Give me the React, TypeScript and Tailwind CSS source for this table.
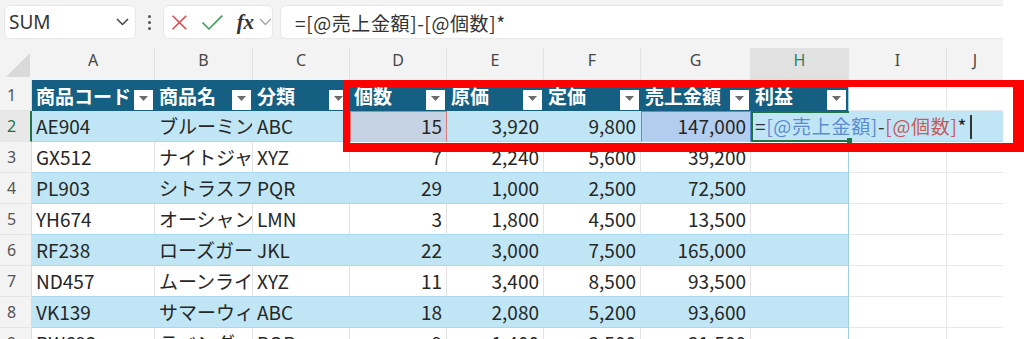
import React from "react";

const colW = [
  "w-[123px]",
  "w-[98px]",
  "w-[97px]",
  "w-[97px]",
  "w-[97px]",
  "w-[97px]",
  "w-[110px]",
  "w-[98px]",
  "w-[98px]",
  "w-[56px]",
];
const letters = ["A", "B", "C", "D", "E", "F", "G", "H", "I", "J"];
const headers = ["商品コード", "商品名", "分類", "個数", "原価", "定価", "売上金額", "利益"];

type Row = [string, string, string, number, number, number, number];
const rows: Row[] = [
  ["AE904", "ブルーミングガーデン", "ABC", 15, 3920, 9800, 147000],
  ["GX512", "ナイトジャスミン", "XYZ", 7, 2240, 5600, 39200],
  ["PL903", "シトラスフレッシュ", "PQR", 29, 1000, 2500, 72500],
  ["YH674", "オーシャンブリーズ", "LMN", 3, 1800, 4500, 13500],
  ["RF238", "ローズガーデン", "JKL", 22, 3000, 7500, 165000],
  ["ND457", "ムーンライトムスク", "XYZ", 11, 3400, 8500, 93500],
  ["VK139", "サマーウィンド", "ABC", 18, 2080, 5200, 93600],
  ["RW692", "ラベンダーミスト", "PQR", 9, 1400, 3500, 31500],
];

const fmt = (n: number) => n.toLocaleString("en-US");

function Dropdown() {
  return (
    <div className="w-[19px] h-[20px] bg-white self-end mb-[1px] mr-[2px] shrink-0 flex justify-center pt-[6px]">
      <svg width="9" height="5" viewBox="0 0 9 5">
        <polygon points="0,0 9,0 4.5,5" fill="#6b6b6b" />
      </svg>
    </div>
  );
}

function TopBar() {
  return (
    <div className="h-[48px] bg-[#f3f3f3] flex items-start pt-[5px] pl-[4px]">
      <div className="w-[132px] h-[34px] bg-white rounded-[6px] border border-[#e8e8e8] flex items-center justify-between pl-[4px] pr-[6px]">
        <span className="text-[19px] text-[#333] font-['Noto_Sans',sans-serif] leading-none">SUM</span>
        <svg width="13" height="8" viewBox="0 0 13 8">
          <path d="M1 1 L6.5 6.5 L12 1" stroke="#444" strokeWidth="1.5" fill="none" />
        </svg>
      </div>
      <div className="w-[27px] h-[34px] flex flex-col items-center justify-center gap-[3px]">
        <span className="w-[3px] h-[3px] rounded-full bg-[#555]" />
        <span className="w-[3px] h-[3px] rounded-full bg-[#555]" />
        <span className="w-[3px] h-[3px] rounded-full bg-[#555]" />
      </div>
      <div className="w-[110px] h-[34px] bg-white rounded-[6px] border border-[#e8e8e8] flex items-center pl-[7px]">
        <svg width="17" height="17" viewBox="0 0 16 16">
          <path d="M1.5 1.5 L14.5 14.5 M14.5 1.5 L1.5 14.5" stroke="#d6434a" strokeWidth="1.4" fill="none" />
        </svg>
        <svg className="ml-[13px]" width="23" height="17" viewBox="0 0 23 17">
          <path d="M1.5 8.5 L8 15 L21.5 1.5" stroke="#3a9c55" strokeWidth="1.6" fill="none" />
        </svg>
        <span className="ml-[13px] text-[21px] italic font-semibold font-['Liberation_Serif',serif] text-[#333] leading-none">fx</span>
        <svg className="ml-[5px]" width="13" height="8" viewBox="0 0 13 8">
          <path d="M1 1 L6.5 6.5 L12 1" stroke="#a5a5a5" strokeWidth="1.3" fill="none" />
        </svg>
      </div>
      <div className="flex-1 ml-[7px] h-[34px] bg-white rounded-l-[6px] border border-r-0 border-[#e8e8e8] flex items-center pl-[14px]">
        <span className="text-[19px] text-[#333] font-['Noto_Sans_CJK_JP',sans-serif] leading-none tracking-[0.6px]">
          =[@売上金額]-[@個数]*
        </span>
      </div>
    </div>
  );
}

function ColumnHeaders() {
  return (
    <div className="h-[32px] flex bg-[#f3f3f3]">
      <div className="w-[32px] h-full shrink-0">
        <svg width="32" height="32" viewBox="0 0 32 32">
          <polygon points="6,29 30,29 30,5" fill="#d9d9d9" />
        </svg>
      </div>
      {letters.map((l, i) => (
        <div
          key={l}
          className={`${colW[i]} shrink-0 h-full flex justify-center items-start leading-[24px] text-[16px] font-['Noto_Sans',sans-serif] border-r border-[#e2e2e2] ${
            l === "H" ? "bg-[#e1e1e1] text-[#2f8060]" : "text-[#474747]"
          } ${i === 9 ? "border-r-0" : ""}`}
        >
          {l}
        </div>
      ))}
    </div>
  );
}

function RowHeader({ n, active }: { n: number; active?: boolean }) {
  return (
    <div
      className={`w-[32px] shrink-0 h-full flex items-center pl-[7px] text-[16px] font-['Noto_Sans',sans-serif] border-b border-[#e4e4e4] ${
        active ? "bg-[#e8e8e8] text-[#217346] border-r-2 border-r-[#217346]" : "bg-[#f3f3f3] text-[#555] border-r border-r-[#dadada]"
      }`}
    >
      {n}
    </div>
  );
}

function HeaderRow() {
  return (
    <div className="h-[31px] flex">
      <RowHeader n={1} />
      {headers.map((h, i) => (
        <div
          key={h}
          className={`${colW[i]} shrink-0 h-full bg-[#156082] flex items-center justify-between pl-[4px] text-white font-bold text-[19px] overflow-hidden whitespace-nowrap ${
            i === 7 ? "border-r border-[#9fd0e8]" : ""
          }`}
        >
          <span className="leading-none">{h}</span>
          <Dropdown />
        </div>
      ))}
      <div className={`${colW[8]} shrink-0 h-full bg-white border-r border-b border-[#e8e8e8]`} />
      <div className={`${colW[9]} shrink-0 h-full bg-white border-b border-[#e8e8e8]`} />
    </div>
  );
}

function DataRow({ r, idx }: { r: Row; idx: number }) {
  const blue = idx % 2 === 0;
  const first = idx === 0;
  const bg = blue ? "bg-[#c0e6f5]" : "bg-white";
  const vr = blue ? "border-r-[#c0e6f5]" : "border-r-[#e3e3e3]";
  const base = `shrink-0 h-full flex items-center whitespace-nowrap overflow-hidden text-[19px] text-[#262626] border-b border-b-[#a9d8ee] border-r`;
  const textCells = [r[0], r[1], r[2]];
  const nums = [r[3], r[4], r[5], r[6]];
  return (
    <div className="h-[31px] flex">
      <RowHeader n={idx + 2} active={first} />
      {textCells.map((t, i) => (
        <div key={i} className={`${colW[i]} ${base} ${bg} ${vr} pl-[4px]`}>
          {t}
        </div>
      ))}
      {nums.map((n, j) => {
        const i = j + 3;
        let special = `${bg} ${vr}`;
        if (first && i === 3) special = "bg-[#c6d3e5] border border-[#e07878]";
        if (first && i === 6) special = "bg-[#b2cded] border border-[#5b8dd6]";
        return (
          <div key={i} className={`${colW[i]} ${base} ${special} justify-end pr-[4px]`}>
            {fmt(n)}
          </div>
        );
      })}
      {first ? (
        <>
          <div className={`${colW[7]} shrink-0 h-full relative z-10 bg-[#c0e6f5] border-2 border-r-0 border-[#217346] flex items-center whitespace-nowrap text-[19px] pl-[2px] tracking-[0.7px]`}>
            <span className="text-[#333]">=</span>
            <span className="text-[#5b8cd0]">[@売上金額]</span>
            <span className="text-[#333]">-</span>
            <span className="text-[#c65a5e]">[@個数]</span>
            <span className="text-[#222]">*</span>
            <span className="inline-block w-[2px] h-[24px] bg-[#333] ml-[3px] shrink-0" />
            <span className="absolute right-[-3px] bottom-[-3px] w-[5px] h-[5px] bg-[#217346]" />
          </div>
          <div className={`${colW[8]} shrink-0 h-full bg-[#c0e6f5] border-b border-[#a9d8ee]`} />
          <div className={`${colW[9]} shrink-0 h-full bg-[#c0e6f5] border-b border-[#a9d8ee]`} />
        </>
      ) : (
        <>
          <div className={`${colW[7]} ${base} ${bg} border-r-[#9fd0e8]`} />
          <div className={`${colW[8]} shrink-0 h-full bg-white border-r border-b border-[#e8e8e8]`} />
          <div className={`${colW[9]} shrink-0 h-full bg-white border-b border-[#e8e8e8]`} />
        </>
      )}
    </div>
  );
}

export default function App() {
  return (
    <div className="w-[1024px] h-[339px] bg-white overflow-hidden relative font-['Noto_Sans_CJK_JP',sans-serif]">
      <div className="w-[1003px]">
        <TopBar />
        <ColumnHeaders />
        <HeaderRow />
        {rows.map((r, i) => (
          <DataRow key={r[0]} r={r} idx={i} />
        ))}
      </div>
      <div className="absolute left-[343px] top-[80px] w-[681px] h-[72px] border-[7px] border-b-[9px] border-r-[11px] border-[#ff0000] pointer-events-none z-20" />
    </div>
  );
}
